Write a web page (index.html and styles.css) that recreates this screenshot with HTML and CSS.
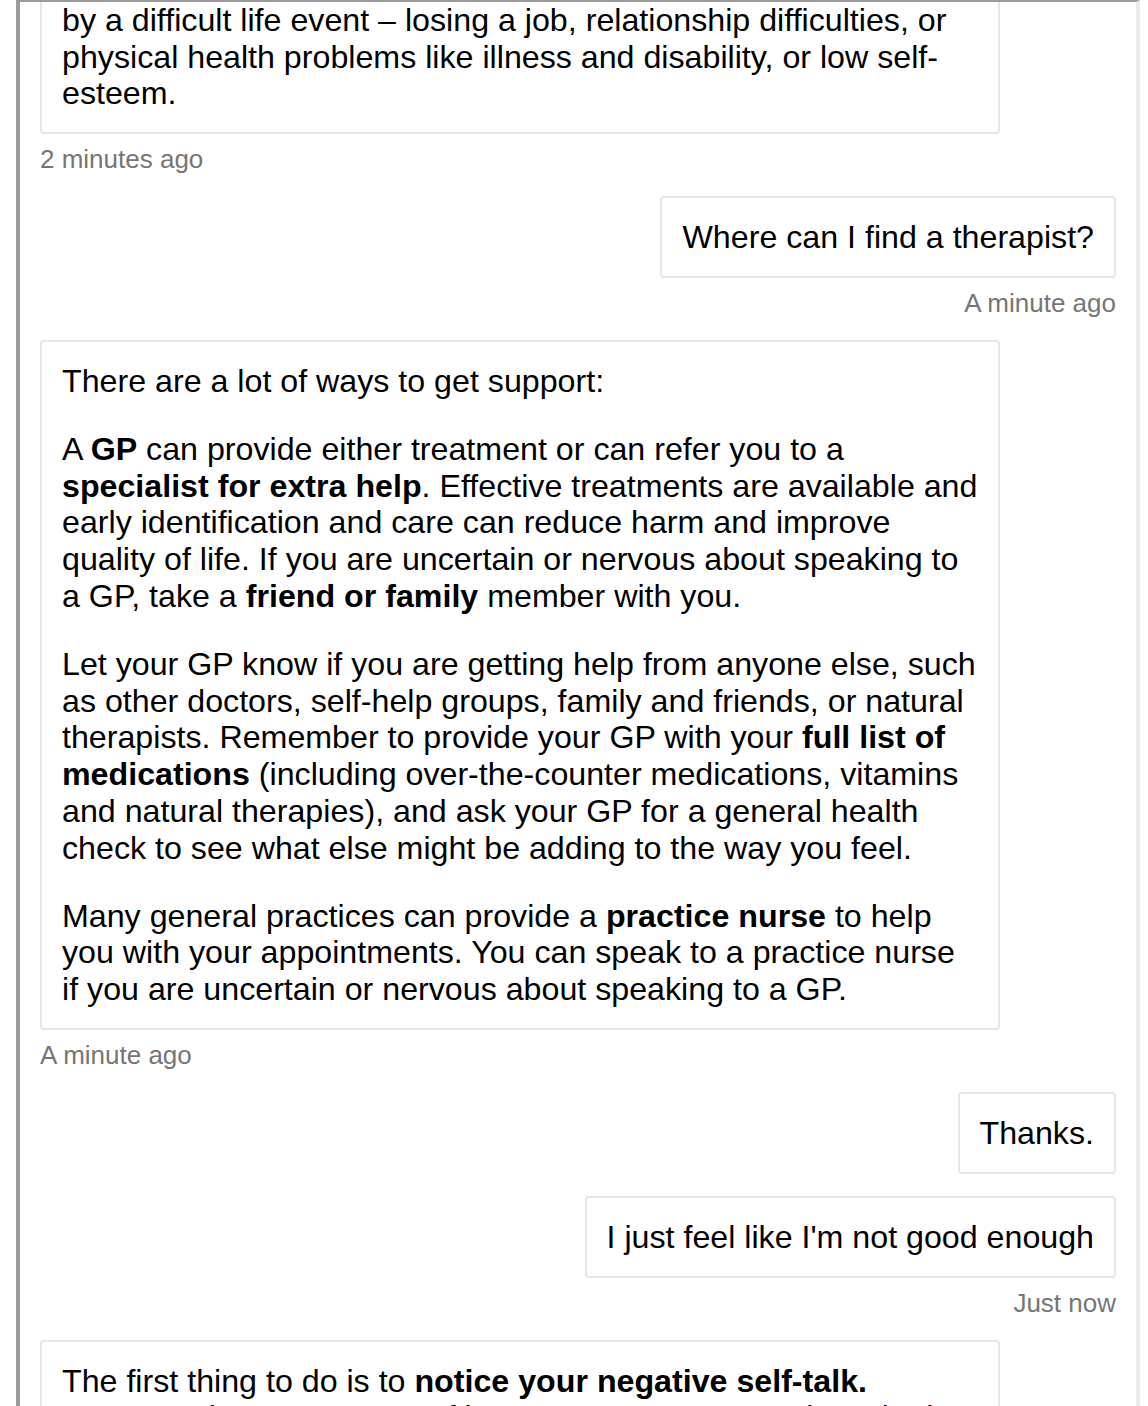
FILE: index.html
```html
<!DOCTYPE html>
<html lang="en">
<head>
<meta charset="utf-8">
<title>Chat</title>
<link rel="stylesheet" href="styles.css">
</head>
<body>
<div class="frame">
  <div class="thread">
    <div class="bubble bot first">
      <p>Sometimes it is triggered<br>by a difficult life event – losing a job, relationship difficulties, or physical health problems like illness and disability, or low self-esteem.</p>
    </div>
    <div class="stamp">2 minutes ago</div>

    <div class="bubble user">
      <p>Where can I find a therapist?</p>
    </div>
    <div class="stamp right">A minute ago</div>

    <div class="bubble bot">
      <p>There are a lot of ways to get support:</p>
      <p>A <b>GP</b> can provide either treatment or can refer you to a <b>specialist for extra help</b>. Effective treatments are available and early identification and care can reduce harm and improve quality of life. If you are uncertain or nervous about speaking to a GP, take a <b>friend or family</b> member with you.</p>
      <p>Let your GP know if you are getting help from anyone else, such as other doctors, self-help groups, family and friends, or natural therapists. Remember to provide your GP with your <b>full list of medications</b> (including over-the-counter medications, vitamins and natural therapies), and ask your GP for a general health check to see what else might be adding to the way you feel.</p>
      <p>Many general practices can provide a <b>practice nurse</b> to help you with your appointments. You can speak to a practice nurse if you are uncertain or nervous about speaking to a GP.</p>
    </div>
    <div class="stamp">A minute ago</div>

    <div class="bubble user">
      <p>Thanks.</p>
    </div>
    <div class="bubble user">
      <p>I just feel like I'm not good enough</p>
    </div>
    <div class="stamp right">Just now</div>

    <div class="bubble bot">
      <p>The first thing to do is to <b>notice your negative self-talk.</b><br>Once you become aware of it, you can start to question whether those thoughts are really true.</p>
    </div>
  </div>
</div>
</body>
</html>
```

FILE: styles.css
```css
html, body {
  margin: 0;
  padding: 0;
  background: #ffffff;
}

body {
  font-family: "Liberation Sans", Arial, Helvetica, sans-serif;
  color: #000000;
}

.frame {
  margin-left: 16px;
  width: 1124px;
  height: 1406px;
  box-sizing: border-box;
  border-left: 4px solid #9b9b9b;
  border-top: 2px solid #9b9b9b;
  border-right: 4px solid #ebebeb;
  overflow: hidden;
}

.thread {
  display: flex;
  flex-direction: column;
  align-items: flex-start;
  padding: 0 20px 0 20px;
}

.bubble {
  box-sizing: border-box;
  max-width: 960px;
  border: 2px solid #e6e6e6;
  border-radius: 4px;
  padding: 21px 20px 20px 20px;
  margin-top: 22px;
  font-size: 32.2px;
  line-height: 36.8px;
  background: #ffffff;
}

.bubble.first {
  margin-top: -60px;
}

.bubble p {
  margin: 31px 0 0 0;
}

.bubble p:first-child {
  margin-top: 0;
}

.bubble.bot {
  width: 960px;
}

.bubble.user {
  align-self: flex-end;
}

.stamp {
  margin-top: 11px;
  font-size: 26px;
  line-height: 29px;
  color: #767676;
}

.stamp.right {
  align-self: flex-end;
}
```
